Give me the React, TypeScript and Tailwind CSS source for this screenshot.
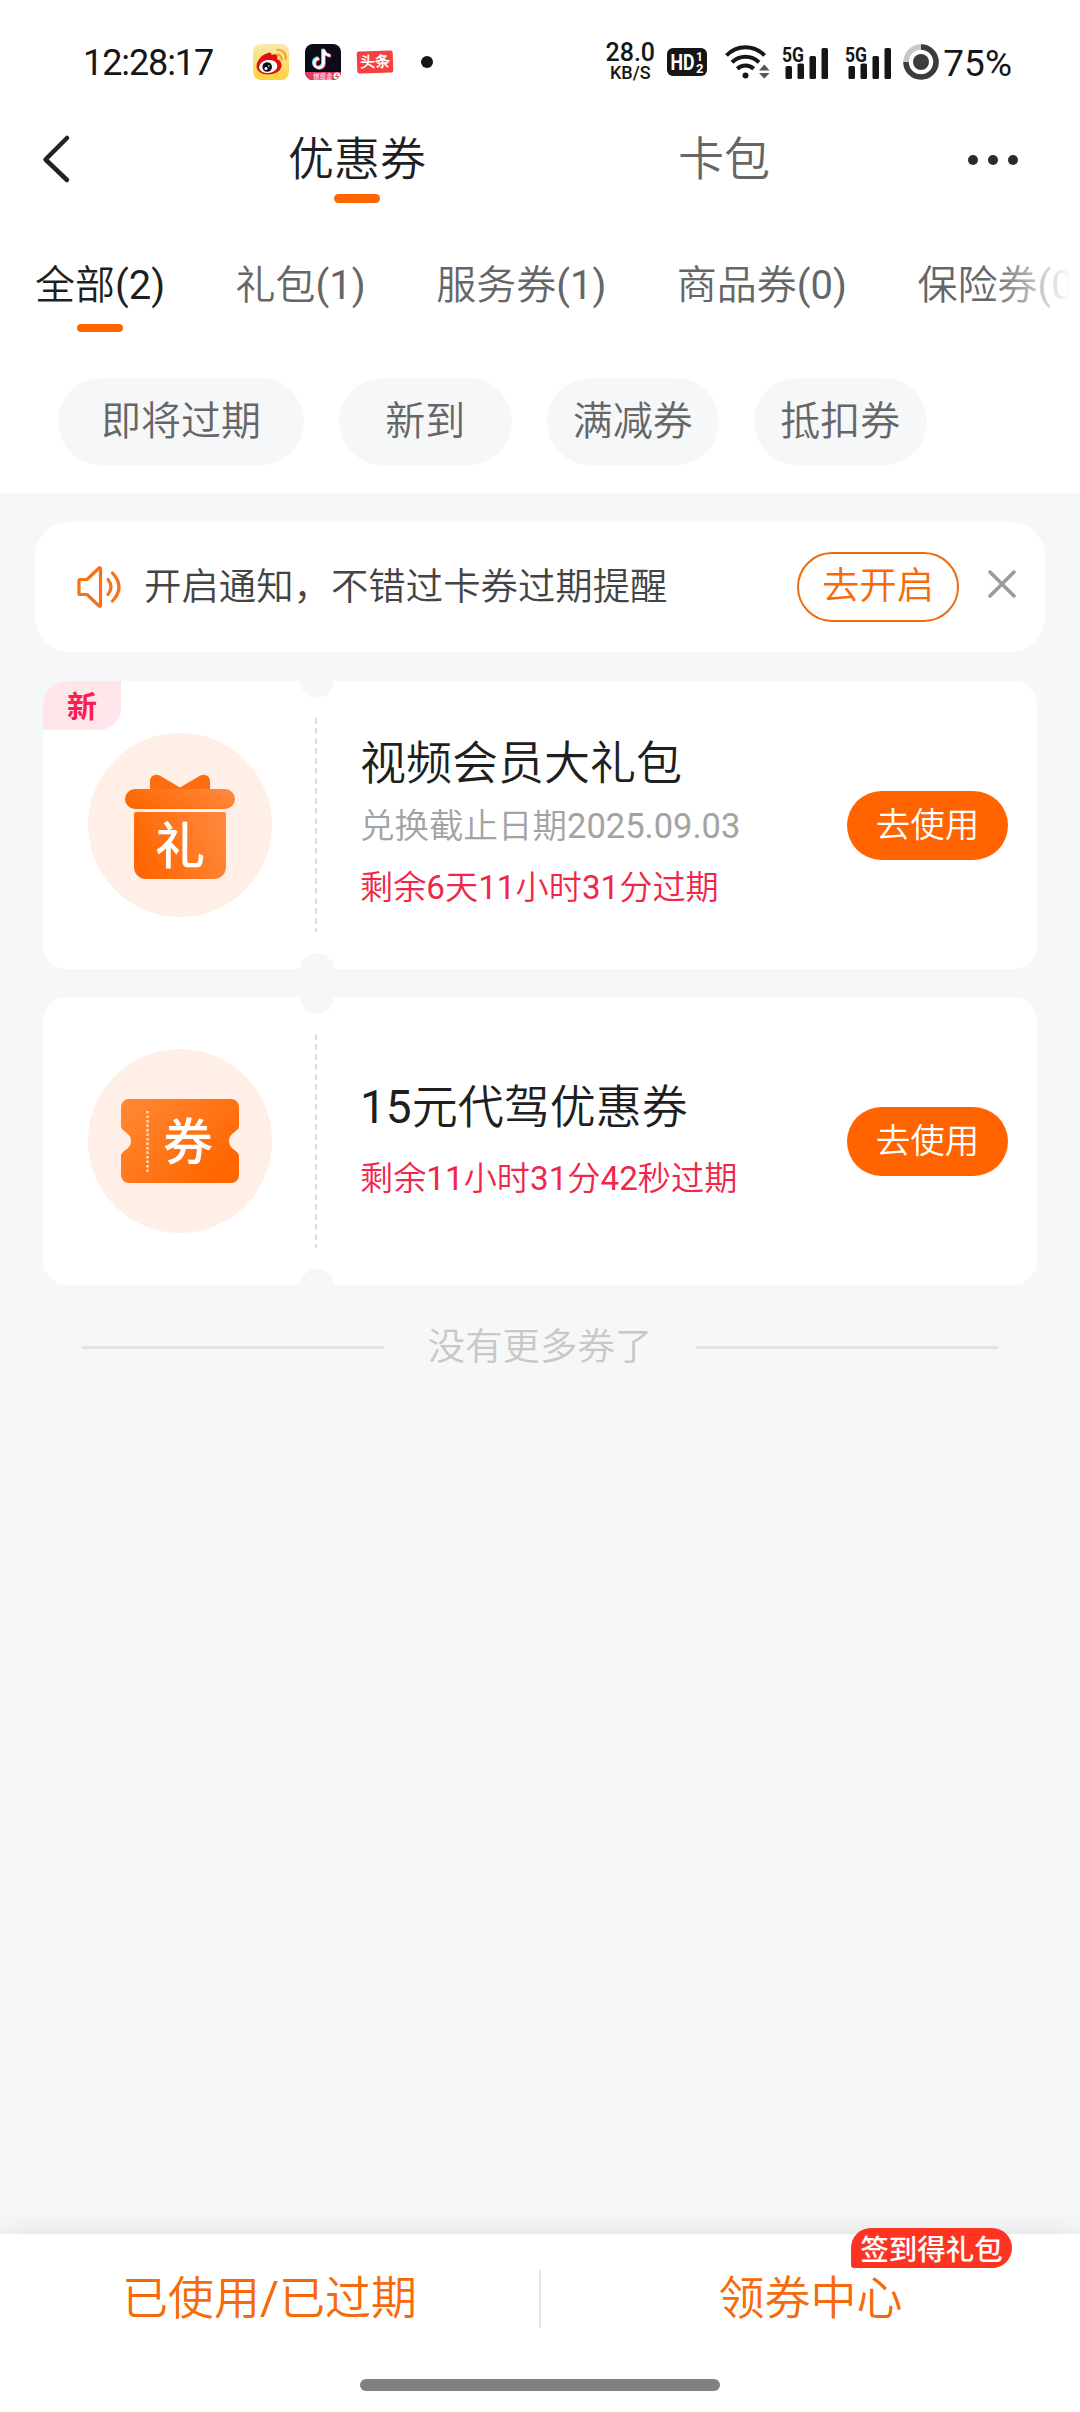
import type { ReactNode } from 'react';
import clsx from 'clsx';

interface Coupon {
  id: string;
  title: string;
  deadline?: string;
  remaining: string;
  isNew?: boolean;
  icon: ReactNode;
}

function WeiboIcon() {
  return (
    <svg className="w-9 h-9" viewBox="0 0 36 36">
      <defs>
        <linearGradient id="weibo-bg" x1="0" y1="0" x2="0" y2="1">
          <stop offset="0" stopColor="#fbe9ae" />
          <stop offset="1" stopColor="#fdd23c" />
        </linearGradient>
      </defs>
      <rect width="36" height="36" rx="8" fill="url(#weibo-bg)" />
      <path d="M3.500 22c0-5 6-12 10.500-12.500 2.500-2 5-1 4.500 1.500 3-1.500 6-.8 6 1.500 0 1-.5 1.700-.5 2.500 2.500.8 4.500 3 4.500 6 0 6-6 9.500-13 9.500s-12-3.500-12-8.500z" fill="#dd1111" />
      <ellipse cx="15.200" cy="22.500" rx="9.200" ry="6.500" transform="rotate(-8 15.500 22.500)" fill="#fff" />
      <circle cx="14.200" cy="23" r="4.800" fill="#111" />
      <circle cx="13" cy="24.500" r="1.600" fill="#fff" />
      <circle cx="15.800" cy="22" r=".8" fill="#fff" />
      <path d="M24 10.500a4.500 4.500 0 0 1 4.500 5.500" fill="none" stroke="#f5a02c" strokeWidth="1.800" strokeLinecap="round" />
      <path d="M24.500 5.800c5.500-.5 9 4 8 9.500" fill="none" stroke="#f5a02c" strokeWidth="2" strokeLinecap="round" />
    </svg>
  );
}

function DouyinIcon() {
  const note = 'M18.500 5.500v13.700a4.600 4.600 0 1 1-4.600-4.600M18.500 5.500c.6 3.500 3 5.800 6.800 6.200';
  return (
    <svg className="w-9 h-9" viewBox="0 0 36 36">
      <defs>
        <clipPath id="douyin-clip">
          <rect width="36" height="36" rx="8" />
        </clipPath>
      </defs>
      <g clipPath="url(#douyin-clip)">
        <rect width="36" height="36" fill="#0c0c18" />
        <path d={note} transform="translate(-.9 -.8)" fill="none" stroke="#3fe6e8" strokeWidth="3" />
        <path d={note} transform="translate(.9 .6)" fill="none" stroke="#f0395c" strokeWidth="3" />
        <path d={note} fill="none" stroke="#fff" strokeWidth="2.800" />
        <path d="M0 28h36v8H0z" fill="#e23a5f" />
        <circle cx="32" cy="32" r="3.500" fill="#fff" />
        <path d="M32.500 29.500l-2 3h3l-1.500 2.500" fill="none" stroke="#e23a5f" strokeWidth="1" />
        <text x="8" y="34.500" fontSize="6.500" fontWeight="700" fill="#fbd5dc">领现金</text>
      </g>
    </svg>
  );
}

function WifiIcon() {
  return (
    <svg className="w-[45px] h-9" viewBox="0 0 45 36" fill="none" stroke="#161616" strokeWidth="4">
      <path d="M1.500 11.500a26 26 0 0 1 38 0" />
      <path d="M7 18.300a19 19 0 0 1 27 0" />
      <path d="M12.300 24.700a12 12 0 0 1 16.400 0" />
      <circle cx="20.500" cy="31.500" r="3" fill="#161616" stroke="none" />
      <path d="M34 26.500l5.300-6 5.300 6zM34 29l5.300 5.500 5.300-5.500z" fill="#555" stroke="none" />
    </svg>
  );
}

function SignalIcon() {
  return (
    <svg className="w-[46px] h-9 overflow-visible" viewBox="0 0 46 36" fill="#161616">
      <text x="0" y="17.500" fontSize="20" fontWeight="700" textLength="22" lengthAdjust="spacingAndGlyphs">5G</text>
      <rect x="3.500" y="22" width="6.500" height="13" rx="1.500" />
      <rect x="15.500" y="19.500" width="6.500" height="15.500" rx="1.500" />
      <rect x="27.500" y="12" width="6.500" height="23" rx="1.500" />
      <rect x="39.500" y="4" width="6.500" height="31" rx="1.500" />
    </svg>
  );
}

function GiftIcon() {
  return (
    <svg className="w-[184px] h-[184px]" viewBox="0 0 184 184">
      <defs>
        <linearGradient id="gift" x1="0" y1=".6" x2="1" y2=".3">
          <stop offset="0" stopColor="#ff6500" />
          <stop offset="1" stopColor="#ff883c" />
        </linearGradient>
      </defs>
      <circle cx="92" cy="92" r="92" fill="#ffefe6" />
      <path d="M62 56V48c0-5.500 6-8 10.500-5L92 54.500l19.500-11.500c4.500-3 10.500-.5 10.500 5v8z" fill="#fd6d10" />
      <rect x="37" y="56" width="110" height="20" rx="10" fill="url(#gift)" />
      <path d="M48 79h88a2 2 0 0 1 2 2V134a12 12 0 0 1-12 12H58a12 12 0 0 1-12-12V81a2 2 0 0 1 2-2z" fill="url(#gift)" />
      <text className="font-['Noto_Sans_CJK_SC',sans-serif]" x="92" y="131" fontSize="50" fontWeight="500" fill="#fff" textAnchor="middle">礼</text>
    </svg>
  );
}

function TicketIcon() {
  return (
    <svg className="w-[184px] h-[184px]" viewBox="0 0 184 184">
      <defs>
        <linearGradient id="ticket" x1="0" y1="0" x2="1" y2=".7">
          <stop offset="0" stopColor="#ff8a35" />
          <stop offset="1" stopColor="#ff6500" />
        </linearGradient>
      </defs>
      <circle cx="92" cy="92" r="92" fill="#ffefe6" />
      <path
        d="M41 50h102a8 8 0 0 1 8 8v19c0 6-10 6-10 15s10 9 10 15v19a8 8 0 0 1-8 8H41a8 8 0 0 1-8-8v-19c0-6 10-6 10-15s-10-9-10-15V58a8 8 0 0 1 8-8z"
        fill="url(#ticket)"
      />
      <path d="M59.500 62v61" stroke="#ffd9bd" strokeWidth="2.500" strokeDasharray="2.500 2" />
      <text className="font-['Noto_Sans_CJK_SC',sans-serif]" x="100" y="111" fontSize="50" fontWeight="500" fill="#fff" textAnchor="middle">券</text>
    </svg>
  );
}

const tabs = ['全部(2)', '礼包(1)', '服务券(1)', '商品券(0)', '保险券(0)'];
const filters = ['即将过期', '新到', '满减券', '抵扣券'];

const coupons: Coupon[] = [
  {
    id: 'video',
    title: '视频会员大礼包',
    deadline: '兑换截止日期2025.09.03',
    remaining: '剩余6天11小时31分过期',
    isNew: true,
    icon: <GiftIcon />,
  },
  {
    id: 'driver',
    title: '15元代驾优惠券',
    remaining: '剩余11小时31分42秒过期',
    icon: <TicketIcon />,
  },
];

function StatusBar() {
  return (
    <div className="h-[124px] shrink-0 flex items-center pl-[83px] pr-[68px] text-[#161616]">
      <span className="w-[170px] pt-0.5 text-[36px] leading-none tracking-[-1.100px] whitespace-nowrap">12:28:17</span>
      <div className="flex items-center gap-4">
        <WeiboIcon />
        <DouyinIcon />
        <span className="w-9 h-[22px] rounded-[2px] bg-[#f5403f] text-white text-[15px] leading-none font-bold flex items-center justify-center -rotate-2">
          头条
        </span>
        <span className="w-3 h-3 rounded-full bg-[#161616] ml-3" />
      </div>

      <div className="ml-auto flex items-center">
        <div className="w-[50px] flex flex-col items-center font-medium whitespace-nowrap">
          <span className="text-[25px] leading-[20px]">28.0</span>
          <span className="text-[18px] leading-[19px]">KB/S</span>
        </div>
        <svg className="w-10 h-7 ml-3 mr-[18px]" viewBox="0 0 40 28">
          <rect width="40" height="28" rx="6" fill="#161616" />
          <g fill="#fff" fontWeight="700">
            <text x="3.500" y="22" fontSize="22" textLength="24" lengthAdjust="spacingAndGlyphs">HD</text>
            <text x="29" y="13" fontSize="12">1</text>
            <text x="29" y="25" fontSize="13">2</text>
          </g>
        </svg>
        <WifiIcon />
        <div className="flex gap-[17px] ml-3 mr-3">
          <SignalIcon />
          <SignalIcon />
        </div>
        <svg className="w-9 h-9 mr-1" viewBox="0 0 36 36">
          <circle cx="18" cy="18" r="15" fill="none" stroke="#c8c8c8" strokeWidth="5.500" />
          <path d="M18 3a15 15 0 1 1-15 15" fill="none" stroke="#3c3c3c" strokeWidth="5.500" />
          <circle cx="18" cy="18" r="8" fill="#3c3c3c" />
        </svg>
        <span className="pt-0.5 text-[37px] leading-none">75%</span>
      </div>
    </div>
  );
}

function NavBar() {
  return (
    <div className="h-[96px] shrink-0 flex items-start pt-[7px]">
      <svg className="w-[30px] h-[50px] ml-[41px] mt-[3px]" viewBox="0 0 30 50" fill="none" stroke="#222" strokeWidth="4.500" strokeLinecap="round" strokeLinejoin="round">
        <path d="M26 4L4.500 25.500 26 46" />
      </svg>
      <div className="w-[138px] ml-[217px] flex flex-col items-center">
        <span className="text-[46px] leading-[56px] text-[#1f1f1f]">优惠券</span>
        <span className="w-[46px] h-[9px] mt-[7px] rounded-full bg-[#ff6600]" />
      </div>
      <span className="ml-[252px] text-[46px] leading-[56px] text-[#666]">卡包</span>
      <div className="ml-[198px] mt-6 flex gap-[10px]">
        <span className="w-2.5 h-2.5 rounded-full bg-[#2b2b2b]" />
        <span className="w-2.5 h-2.5 rounded-full bg-[#2b2b2b]" />
        <span className="w-2.5 h-2.5 rounded-full bg-[#2b2b2b]" />
      </div>
    </div>
  );
}

function CouponCard({ coupon }: { coupon: Coupon }) {
  return (
    <div className="relative h-[288px] rounded-[24px] bg-white overflow-hidden flex items-center">
      {/* Punched notches above and below the tear line */}
      <span className="absolute left-[257px] -top-[17px] w-[34px] h-[34px] rounded-full bg-[#f5f7f9]" />
      <span className="absolute left-[257px] -bottom-[18px] w-[34px] h-[34px] rounded-full bg-[#f5f7f9]" />
      {coupon.isNew && (
        <span className="absolute left-0 top-0 w-[78px] h-[49px] rounded-br-[22px] bg-[#fee6ea] text-[#fa1e50] text-[30px] leading-[47px] font-bold font-['Noto_Sans_CJK_SC',sans-serif] text-center">
          新
        </span>
      )}

      <div className="ml-[45px]">{coupon.icon}</div>
      <svg className="w-0.5 h-[214px] ml-[43px]" viewBox="0 0 2 214">
        <path d="M1 0v214" stroke="#dcdcdc" strokeWidth="2" strokeDasharray="6 4" />
      </svg>

      <div className="ml-[43px] flex-1 whitespace-nowrap">
        <div className={clsx('text-[46px] leading-[56px] text-[#1f1f1f]', coupon.deadline ? 'mb-[7px]' : 'mt-[3px] mb-4')}>
          {coupon.title}
        </div>
        {coupon.deadline && (
          <div className="mb-1.5 text-[34.500px] leading-[56px] text-[#a3a3a3]">{coupon.deadline}</div>
        )}
        <div className="text-[33.200px] leading-[56px] text-[#f0264a]">{coupon.remaining}</div>
      </div>

      <button className="w-[161px] h-[69px] mr-[29px] rounded-full bg-[#ff6400] text-white text-[34.500px] leading-none">
        去使用
      </button>
    </div>
  );
}

export default function App() {
  return (
    <div className="w-[1080px] h-[2412px] overflow-hidden flex flex-col bg-[#f5f7f9] font-[Roboto,'Noto_Sans_CJK_SC_DemiLight','Noto_Sans_CJK_SC',sans-serif]">
      <header className="h-[493px] shrink-0 bg-white flex flex-col">
        <StatusBar />
        <NavBar />

        <div className="relative h-[134px] shrink-0 pl-[35px] pt-[40px] flex gap-[70.500px] overflow-hidden">
          {tabs.map((tab, i) => (
            <div key={tab} className="shrink-0 flex flex-col items-center">
              <span className={clsx('text-[40px] leading-[52px]', i === 0 ? 'text-[#1f1f1f]' : 'text-[#666]')}>
                {tab}
              </span>
              {i === 0 && <span className="w-[46px] h-2 mt-3 rounded-full bg-[#ff6600]" />}
            </div>
          ))}
          <div className="absolute right-0 top-0 h-full w-[92px] bg-linear-to-r from-white/0 to-white to-90%" />
        </div>

        <div className="mt-6 pl-[58px] flex gap-[35px]">
          {filters.map((label) => (
            <span
              key={label}
              className="min-w-[172.500px] h-[87px] px-[26px] rounded-full bg-[#f5f7f9] text-[#666] text-[40px] leading-[88px] text-center first:px-[43px]"
            >
              {label}
            </span>
          ))}
        </div>
      </header>

      <main className="flex-1 flex flex-col pt-[29px]">
        <div className="mx-[35px] h-[130px] rounded-[34px] bg-white flex items-center">
          <svg className="w-[46px] h-[44px] ml-[41px]" viewBox="0 0 46 44" fill="none" stroke="#f5711a" strokeWidth="3.200" strokeLinecap="round" strokeLinejoin="round">
            <path d="M4 14.500h7L23 3q1.500-1 1.500 1v36q0 2-1.500 1L11 29.500H4a1 1 0 0 1-1-1v-13a1 1 0 0 1 1-1z" />
            <path d="M32 14.500q6 7.500 0 15" />
            <path d="M36.500 8q13 14 0 28" />
          </svg>
          <span className="ml-[22px] text-[37.400px] text-[#444]">开启通知，不错过卡券过期提醒</span>
          <button className="ml-auto w-[162px] h-[70px] rounded-full border-2 border-[#ee6c10] text-[#f56a0a] text-[37.400px] leading-none">
            去开启
          </button>
          <svg className="w-7 h-7 ml-[29px] mr-[29px] -mt-[7px]" viewBox="0 0 28 28" stroke="#9a9a9a" strokeWidth="3.500" strokeLinecap="round">
            <path d="M2 2l24 24M26 2L2 26" />
          </svg>
        </div>

        <div className="mt-[29px] mx-[43px] flex flex-col gap-7">
          {coupons.map((c) => (
            <CouponCard key={c.id} coupon={c} />
          ))}
        </div>

        <div className="mt-9 mx-[82px] flex items-center justify-between text-[37.400px] leading-[52px] text-[#c8c8c8]">
          <span className="w-[302px] h-[3px] bg-[#e2e3e5]" />
          没有更多券了
          <span className="w-[302px] h-[3px] bg-[#e2e3e5]" />
        </div>
      </main>

      <footer className="h-[178px] shrink-0 bg-white shadow-[0_0_26px_rgba(0,0,0,0.1)] flex flex-col items-center">
        <div className="relative w-full h-[145px] pb-[18px] flex items-center text-[46px] leading-[56px] text-[#f56a0a]">
          <span className="flex-1 text-center">已使用/已过期</span>
          <span className="w-0.5 h-[58px] mt-[3px] bg-[#e4e4e4]" />
          <span className="flex-1 text-center">领券中心</span>
          <span className="absolute left-[851px] -top-1.5 w-[161px] h-10 rounded-[20px] rounded-bl-[3px] bg-[#fe3423] text-white text-[28.500px] leading-10 font-medium font-['Noto_Sans_CJK_SC',sans-serif] text-center">
            签到得礼包
          </span>
        </div>
        <span className="w-[360px] h-3 rounded-full bg-[#808080]" />
      </footer>
    </div>
  );
}
